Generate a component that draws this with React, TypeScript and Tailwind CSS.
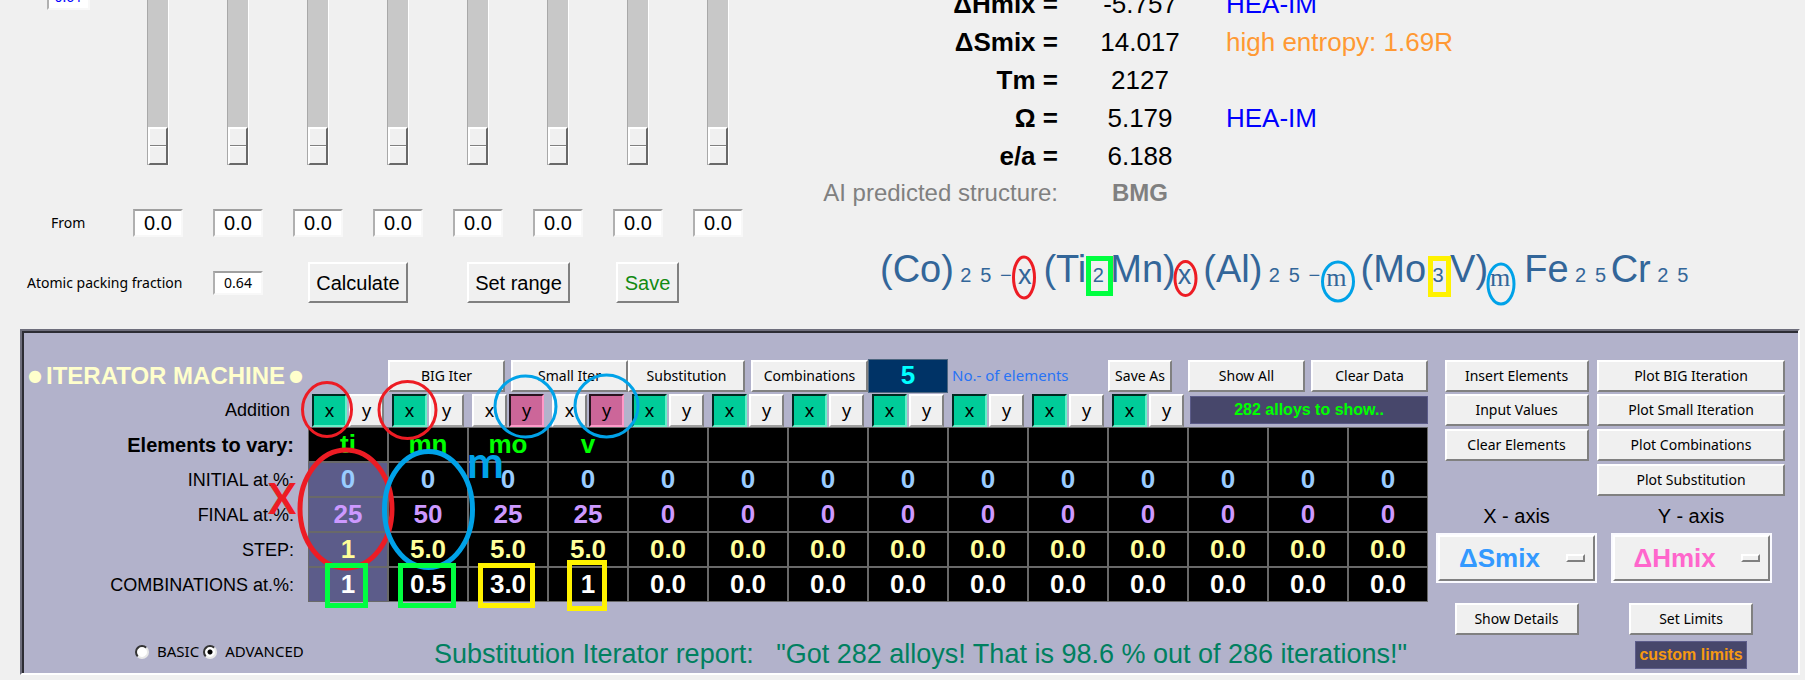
import React, { useState } from "react";
import clsx from "clsx";

const UI = "font-['Noto_Sans',sans-serif]";
const ARIAL = "font-['Liberation_Sans',sans-serif]";
const RAISED = "border-2 border-t-white border-l-white border-r-[#808080] border-b-[#808080] bg-[#f0f0f0]";
const SUNKEN =
  "border-2 border-t-[#a0a0a0] border-l-[#b0b0b0] border-r-[#f8f8f8] border-b-[#f8f8f8] bg-white text-center";

function ToolButton({ children, className }: { children: React.ReactNode; className?: string }) {
  return (
    <button type="button" className={clsx(RAISED, UI, "h-8 whitespace-nowrap text-sm leading-5", className)}>
      {children}
    </button>
  );
}

const channels = [1, 2, 3, 4, 5, 6, 7, 8];

function SliderPanel() {
  return (
    <section className="w-[758px] shrink-0">
      <div className="flex items-start">
        <div className="flex w-[118px] justify-end pr-7">
          <input
            aria-label="Step"
            defaultValue="0.61"
            className={clsx(SUNKEN, UI, "-mt-[18px] h-7 w-[43px] text-sm text-[#0000ff]")}
          />
        </div>
        {channels.map((n) => (
          <div key={n} className="flex w-20 justify-center">
            <input
              type="range"
              aria-label={`Element ${n}`}
              min={0}
              max={100}
              defaultValue={0}
              className="h-[165px] w-[22px] appearance-none border-r border-l border-r-white border-l-[#a8a8a8] bg-[#c8c8c8] [direction:rtl] [writing-mode:vertical-lr] [&::-webkit-slider-thumb]:h-[38px] [&::-webkit-slider-thumb]:w-5 [&::-webkit-slider-thumb]:appearance-none [&::-webkit-slider-thumb]:border-2 [&::-webkit-slider-thumb]:border-t-white [&::-webkit-slider-thumb]:border-r-[#696969] [&::-webkit-slider-thumb]:border-b-[#696969] [&::-webkit-slider-thumb]:border-l-white [&::-webkit-slider-thumb]:bg-[linear-gradient(to_bottom,#f0f0f0_16px,#808080_16px,#808080_17px,#fff_17px,#fff_18px,#f0f0f0_18px)]"
            />
          </div>
        ))}
      </div>

      <div className="mt-11 flex items-center">
        <span className={clsx(UI, "w-[118px] pl-[51px] text-sm")}>From</span>
        {channels.map((n) => (
          <div key={n} className="flex w-20 justify-center">
            <input
              aria-label={`From ${n}`}
              defaultValue="0.0"
              className={clsx(SUNKEN, ARIAL, "h-7 w-[50px] text-xl leading-6")}
            />
          </div>
        ))}
      </div>

      <div className="mt-[25px] flex items-center pl-[27px]">
        <label htmlFor="apf" className={clsx(UI, "w-[186px] text-sm")}>
          Atomic packing fraction
        </label>
        <input id="apf" defaultValue="0.64" className={clsx(SUNKEN, UI, "h-6 w-[50px] text-sm")} />
        <button type="button" className={clsx(RAISED, ARIAL, "ml-[45px] h-[41px] w-[100px] text-xl")}>
          Calculate
        </button>
        <button type="button" className={clsx(RAISED, ARIAL, "ml-[59px] h-[41px] w-[103px] text-xl")}>
          Set range
        </button>
        <button type="button" className={clsx(RAISED, ARIAL, "ml-[46px] h-[41px] w-[63px] text-xl text-[#138a13]")}>
          Save
        </button>
      </div>
    </section>
  );
}

const results = [
  { name: "ΔHmix =", value: "-5.757", note: "HEA-IM", tone: "text-[#0000ff]" },
  { name: "ΔSmix =", value: "14.017", note: "high entropy: 1.69R", tone: "text-[#ff9933]" },
  { name: "Tm =", value: "2127", note: "", tone: "" },
  { name: "Ω =", value: "5.179", note: "HEA-IM", tone: "text-[#0000ff]" },
  { name: "e/a =", value: "6.188", note: "", tone: "" },
];

function Sub({ children }: { children: React.ReactNode }) {
  return <span className="inline-block w-5 text-center text-xl">{children}</span>;
}

function Formula() {
  return (
    <p className="mt-9 flex items-baseline pl-[122px] text-[38px] leading-[44px] whitespace-nowrap text-[#336699]">
      <span>(Co)</span>
      <span className="ml-0.5">
        <Sub>2</Sub>
        <Sub>5</Sub>
        <Sub>−</Sub>
      </span>
      <span className="relative top-0.5 ml-0.5 text-[27px]">x</span>
      <span className="ml-3">(Ti</span>
      <span className="px-0.5">
        <Sub>2</Sub>
      </span>
      <span>Mn)</span>
      <span className="relative top-0.5 ml-0.5 text-[27px]">x</span>
      <span className="ml-3">(Al)</span>
      <span className="ml-0.5">
        <Sub>2</Sub>
        <Sub>5</Sub>
        <Sub>−</Sub>
      </span>
      <span className="relative top-1 ml-0.5 font-['Liberation_Serif',serif] text-[26px]">m</span>
      <span className="ml-3.5">(Mo</span>
      <span className="px-0.5">
        <Sub>3</Sub>
      </span>
      <span>V)</span>
      <span className="relative top-1 ml-0.5 font-['Liberation_Serif',serif] text-[26px]">m</span>
      <span className="ml-3.5">Fe</span>
      <span className="ml-0.5">
        <Sub>2</Sub>
        <Sub>5</Sub>
      </span>
      <span>Cr</span>
      <span className="ml-0.5">
        <Sub>2</Sub>
        <Sub>5</Sub>
      </span>
    </p>
  );
}

function ResultsPanel() {
  return (
    <section className={clsx(ARIAL, "min-w-0 flex-1")}>
      <table className="-mt-[15px] border-collapse text-[26px] leading-[30px]">
        <tbody>
          {results.map((r) => (
            <tr key={r.name} className="h-[38px]">
              <th scope="row" className="w-[300px] p-0 text-right font-bold">
                {r.name}
              </th>
              <td className="w-[164px] p-0 text-center">{r.value}</td>
              <td className={clsx("p-0 pl-1 text-left whitespace-nowrap", r.tone)}>{r.note}</td>
            </tr>
          ))}
          <tr className="h-9 text-2xl text-[#808080]">
            <th scope="row" className="p-0 text-right font-normal whitespace-nowrap">
              AI predicted structure:
            </th>
            <td className="p-0 text-center font-bold">BMG</td>
            <td />
          </tr>
        </tbody>
      </table>
      <Formula />
    </section>
  );
}

const elements = ["ti", "mn", "mo", "v", "", "", "", "", "", "", "", "", "", ""];
const rest = (v: string) => Array(10).fill(v) as string[];
const entryRows = [
  { label: "INITIAL at.%:", tone: "text-[#99ccff]", values: ["0", "0", "0", "0", ...rest("0")] },
  { label: "FINAL at.%:", tone: "text-[#cc99ff]", values: ["25", "50", "25", "25", ...rest("0")] },
  { label: "STEP:", tone: "text-[#ffff99]", values: ["1", "5.0", "5.0", "5.0", ...rest("0.0")] },
  { label: "COMBINATIONS at.%:", tone: "text-white", values: ["1", "0.5", "3.0", "1", ...rest("0.0")] },
];

function EntryCell({ value, tone, label, marked }: { value: string; tone: string; label: string; marked?: boolean }) {
  return (
    <td className="p-0">
      <input
        aria-label={label}
        defaultValue={value}
        className={clsx(
          "block h-[35px] w-full border border-[#696969] text-center text-[26px] leading-[30px] font-bold",
          marked ? "bg-[#5c5c8a]" : "bg-black",
          tone,
        )}
      />
    </td>
  );
}

const initialAxes = ["x", "x", "y", "y", "x", "x", "x", "x", "x", "x", "x"];

function AxisToggle({ value, onChange }: { value: string; onChange: (v: string) => void }) {
  const base = "h-[33px] w-[35px] border-2 text-lg leading-6";
  const off = "border-t-white border-l-white border-r-[#808080] border-b-[#a0a0a0] bg-[#f0f0f0]";
  return (
    <div className={clsx(UI, "flex gap-0.5 pl-1")}>
      <button
        type="button"
        aria-pressed={value === "x"}
        onClick={() => onChange("x")}
        className={clsx(
          base,
          value === "x" ? "border-t-[#00291f] border-l-[#00291f] border-r-[#66f0c8] border-b-[#66f0c8] bg-[#00cc99]" : off,
        )}
      >
        x
      </button>
      <button
        type="button"
        aria-pressed={value === "y"}
        onClick={() => onChange("y")}
        className={clsx(
          base,
          value === "y" ? "border-t-[#29141f] border-l-[#29141f] border-r-[#ff99c8] border-b-[#ff99c8] bg-[#cc6699]" : off,
        )}
      >
        y
      </button>
    </div>
  );
}

function IteratorTable() {
  const [axes, setAxes] = useState(initialAxes);
  return (
    <table className={clsx(ARIAL, "w-[1404px] table-fixed border-collapse")}>
      <colgroup>
        <col className="w-[284px]" />
        {elements.map((_, i) => (
          <col key={i} className="w-20" />
        ))}
      </colgroup>
      <tbody>
        <tr className="h-[35px]">
          <th scope="row" className="p-0 pl-1 text-left text-2xl leading-7 whitespace-nowrap text-[#ffffcc]">
            <span className="flex items-center gap-1">
              <span className="font-['DejaVu_Sans',sans-serif] text-base font-normal">●</span>
              ITERATOR MACHINE
              <span className="font-['DejaVu_Sans',sans-serif] text-base font-normal">●</span>
            </span>
          </th>
          <td className="p-0" />
          <td colSpan={3} className="p-0">
            <div className="flex justify-between">
              <ToolButton className="w-[117px]">BIG Iter</ToolButton>
              <ToolButton className="w-[117px]">Small Iter</ToolButton>
            </div>
          </td>
          <td colSpan={3} className="p-0">
            <div className="flex justify-between">
              <ToolButton className="w-[117px]">Substitution</ToolButton>
              <ToolButton className="w-[117px]">Combinations</ToolButton>
            </div>
          </td>
          <td className="p-0">
            <input
              id="count"
              defaultValue="5"
              className="block h-[34px] w-full border border-[#4d6680] bg-[#003366] text-center text-[26px] leading-[30px] font-bold text-[#00ffff]"
            />
          </td>
          <td colSpan={2} className="p-0 pl-1">
            <label htmlFor="count" className={clsx(UI, "text-[15px] whitespace-nowrap text-[#2873f5]")}>
              No.- of elements
            </label>
          </td>
          <td className="p-0">
            <ToolButton className="w-16">Save As</ToolButton>
          </td>
          <td colSpan={3} className="p-0">
            <div className="flex justify-between">
              <ToolButton className="w-[117px]">Show All</ToolButton>
              <ToolButton className="w-[117px]">Clear Data</ToolButton>
            </div>
          </td>
        </tr>
        <tr className="h-[34px]">
          <th scope="row" className="p-0 pr-[18px] text-right text-lg leading-6 font-normal">
            Addition
          </th>
          {axes.map((v, i) => (
            <td key={i} className="p-0">
              <AxisToggle value={v} onChange={(next) => setAxes(axes.map((a, j) => (j === i ? next : a)))} />
            </td>
          ))}
          <td colSpan={3} className="p-0 pl-0.5">
            <div className="h-7 border border-[#5c5c8a] bg-[#47476b] text-center text-base leading-[26px] font-bold text-[#00ff00]">
              282 alloys to show..
            </div>
          </td>
        </tr>
        <tr className="h-[35px]">
          <th scope="row" className="p-0 pr-[14px] text-right text-xl leading-6">
            Elements to vary:
          </th>
          {elements.map((e, i) => (
            <EntryCell key={i} value={e} tone="text-[#00ff00]" label={`Element ${i + 1}`} />
          ))}
        </tr>
        {entryRows.map((row) => (
          <tr key={row.label} className="h-[35px]">
            <th scope="row" className="p-0 pr-[14px] text-right text-lg leading-6 font-normal">
              {row.label}
            </th>
            {row.values.map((v, i) => (
              <EntryCell key={i} value={v} tone={row.tone} marked={i === 0} label={`${row.label} ${i + 1}`} />
            ))}
          </tr>
        ))}
      </tbody>
    </table>
  );
}

function AxisSelect({ id, value, tone }: { id: string; value: string; tone: string }) {
  return (
    <div className="relative h-[50px] w-[161px] border-2 border-[#fafaff] bg-[#f0f0f0]">
      <select
        id={id}
        defaultValue={value}
        className={clsx(
          ARIAL,
          RAISED,
          tone,
          "h-full w-full appearance-none pl-[19px] text-[26px] leading-[30px] font-bold",
        )}
      >
        <option>{value}</option>
      </select>
      <span className="pointer-events-none absolute top-[19px] right-2.5 h-2 w-[19px] border-2 border-t-white border-r-[#808080] border-b-[#808080] border-l-white bg-[#f0f0f0]" />
    </div>
  );
}

function PlotControls() {
  return (
    <div className={clsx(ARIAL, "flex pl-2")}>
      <div className="flex w-[161px] flex-col items-center">
        <div className="flex h-[140px] flex-col gap-0.5 pt-0.5">
          <ToolButton className="w-36">Insert Elements</ToolButton>
          <ToolButton className="w-36">Input Values</ToolButton>
          <ToolButton className="mt-px w-36">Clear Elements</ToolButton>
        </div>
        <label htmlFor="x-axis" className="h-[35px] pt-1.5 text-xl leading-6">
          X - axis
        </label>
        <AxisSelect id="x-axis" value="ΔSmix" tone="text-[#3399ff]" />
        <ToolButton className="mt-5 w-[124px]">Show Details</ToolButton>
      </div>
      <div className="flex w-[188px] flex-col items-center">
        <div className="flex h-[140px] flex-col gap-0.5 pt-0.5">
          <ToolButton className="w-[188px]">Plot BIG Iteration</ToolButton>
          <ToolButton className="w-[188px]">Plot Small Iteration</ToolButton>
          <ToolButton className="mt-px w-[188px]">Plot Combinations</ToolButton>
          <ToolButton className="mt-px w-[188px]">Plot Substitution</ToolButton>
        </div>
        <label htmlFor="y-axis" className="h-[35px] pt-1.5 text-xl leading-6">
          Y - axis
        </label>
        <AxisSelect id="y-axis" value="ΔHmix" tone="text-[#ff66cc]" />
        <ToolButton className="mt-5 w-[124px]">Set Limits</ToolButton>
        <div className="mt-1.5 h-7 border border-[#5c5c8a] bg-[#47476b] px-[3px] text-base leading-[26px] font-bold whitespace-nowrap text-[#f79a10]">
          custom limits
        </div>
      </div>
    </div>
  );
}

function ModeRadio({ label, checked }: { label: string; checked?: boolean }) {
  return (
    <label className={clsx(UI, "flex items-center gap-2 text-[15px]")}>
      <input
        type="radio"
        name="mode"
        defaultChecked={checked}
        className="h-3.5 w-3.5 appearance-none rounded-full border-2 border-t-[#333] border-r-[#e8e8e8] border-b-[#e8e8e8] border-l-[#333] bg-white checked:bg-[radial-gradient(circle,#000_2px,#fff_3px)]"
      />
      {label}
    </label>
  );
}

function IteratorMachine() {
  return (
    <section className="mr-[5px] ml-5 border-2 border-t-[#6e6e7c] border-r-white border-b-white border-l-[#6e6e7c]">
      <div className="flex border-t-2 border-l-2 border-[#2c2c34] bg-[#b2b2cb] pt-[25px]">
        <div>
          <IteratorTable />
          <div className="flex h-[71px] items-center pt-7">
            <div className="flex w-[402px] gap-1 pl-[111px]">
              <ModeRadio label="BASIC" />
              <ModeRadio label="ADVANCED" checked />
            </div>
            <p className={clsx(ARIAL, "pt-1 pl-2 text-[27px] leading-[30px] whitespace-pre text-[#008060]")}>
              {'Substitution Iterator report:   "Got 282 alloys! That is 98.6 % out of 286 iterations!"'}
            </p>
          </div>
        </div>
        <PlotControls />
      </div>
    </section>
  );
}

function Annotations() {
  return (
    <div className="pointer-events-none absolute top-0 left-0">
      <svg width="1805" height="680" viewBox="0 0 1805 680" fill="none" aria-hidden="true">
        <g stroke="#ed1c24" strokeWidth="3">
          <ellipse cx="1024" cy="277.5" rx="10.5" ry="20.5" />
          <ellipse cx="1185.5" cy="278.5" rx="10.5" ry="17" />
          <ellipse cx="327" cy="409.5" rx="24.5" ry="27" />
          <ellipse cx="407.5" cy="410" rx="28.5" ry="28.5" />
          <ellipse cx="346" cy="509" rx="46" ry="59" strokeWidth="5" />
        </g>
        <g stroke="#00a2e8" strokeWidth="3">
          <ellipse cx="1338" cy="281.5" rx="15.5" ry="19.5" />
          <ellipse cx="1501" cy="284" rx="13" ry="20" />
          <ellipse cx="525.5" cy="406.5" rx="30.5" ry="30.5" />
          <ellipse cx="606.5" cy="406" rx="31.5" ry="31" />
          <ellipse cx="428.5" cy="509.5" rx="44" ry="58" strokeWidth="5" />
        </g>
        <g stroke="#00ff40" strokeWidth="5">
          <rect x="1088.5" y="258.5" width="22" height="35" />
          <rect x="327.5" y="565.5" width="38" height="40" />
          <rect x="400.5" y="565.5" width="53" height="40" />
        </g>
        <g stroke="#fff200" strokeWidth="5">
          <rect x="1430.5" y="258.5" width="18" height="36" />
          <rect x="480.5" y="565.5" width="52" height="40" />
          <rect x="569.5" y="562.5" width="35" height="46" />
        </g>
      </svg>
      <span className="absolute top-[474px] left-[268px] font-['Lato',sans-serif] text-[42px] leading-[48px] font-bold text-[#ed1c24]">
        X
      </span>
      <span className="absolute top-[437px] left-[467px] font-['Lato',sans-serif] text-[44px] leading-[48px] font-bold text-[#00a2e8]">
        m
      </span>
    </div>
  );
}

export default function App() {
  return (
    <main className="relative min-h-screen overflow-hidden bg-[#f0f0f0] text-black">
      <div className="flex h-[329px] items-start">
        <SliderPanel />
        <ResultsPanel />
      </div>
      <IteratorMachine />
      <Annotations />
    </main>
  );
}
